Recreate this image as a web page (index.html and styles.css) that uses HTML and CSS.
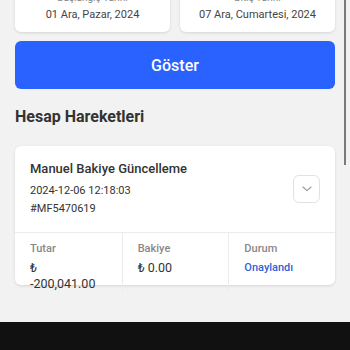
FILE: index.html
```html
<!DOCTYPE html>
<html lang="tr">
<head>
<meta charset="utf-8">
<title>Hesap Hareketleri</title>
<link rel="stylesheet" href="styles.css">
</head>
<body>
<div class="screen">
  <main class="content">
    <div class="dates">
      <div class="date-card">
        <div class="date-label">Başlangıç Tarihi</div>
        <div class="date-value">01 Ara, Pazar, 2024</div>
      </div>
      <div class="date-card">
        <div class="date-label">Bitiş Tarihi</div>
        <div class="date-value">07 Ara, Cumartesi, 2024</div>
      </div>
    </div>
    <button class="show-btn" type="button">Göster</button>
    <h2 class="section-title">Hesap Hareketleri</h2>
    <div class="tx-card">
      <div class="tx-head">
        <div class="tx-info">
          <div class="tx-title">Manuel Bakiye Güncelleme</div>
          <div class="tx-meta tx-date">2024-12-06 12:18:03</div>
          <div class="tx-meta">#MF5470619</div>
        </div>
        <button class="toggle" type="button" aria-label="Detay">
          <svg width="10" height="6" viewBox="0 0 10 6"><path d="M1 1 L5 4.6 L9 1" fill="none" stroke="#9a9a9a" stroke-width="1.1" stroke-linecap="round" stroke-linejoin="round"/></svg>
        </button>
      </div>
      <div class="tx-stats">
        <div class="stat">
          <div class="stat-label">Tutar</div>
          <div class="stat-value">₺ -200,041.00</div>
        </div>
        <div class="stat">
          <div class="stat-label">Bakiye</div>
          <div class="stat-value">₺ 0.00</div>
        </div>
        <div class="stat">
          <div class="stat-label">Durum</div>
          <div class="stat-status">Onaylandı</div>
        </div>
      </div>
    </div>
  </main>
  <div class="scroll-thumb"></div>
  <div class="nav-bar"></div>
</div>
</body>
</html>
```
FILE: styles.css
```css
* { box-sizing: border-box; }
html, body { margin: 0; padding: 0; }
body {
  font-family: Roboto, "Noto Sans", "Liberation Sans", sans-serif;
  background: #f2f2f2;
  color: #333;
}
.screen {
  position: relative;
  width: 350px;
  height: 350px;
  display: flex;
  flex-direction: column;
  overflow: hidden;
}
.content {
  flex: 1;
  overflow: hidden;
  padding: 0 15px;
}
.dates {
  display: flex;
  gap: 10px;
  margin-top: -17px;
}
.date-card {
  flex: 1;
  background: #fff;
  border-radius: 6px;
  box-shadow: 0 1px 3px rgba(0,0,0,0.12);
  padding: 8px 6px 9px;
  text-align: center;
}
.date-label {
  font-size: 10px;
  line-height: 14px;
  color: #888;
  margin-bottom: 2px;
}
.date-value {
  font-size: 11px;
  line-height: 16px;
  color: #444;
}
.show-btn {
  display: block;
  width: 100%;
  height: 48px;
  margin-top: 9px;
  border: 0;
  border-radius: 6px;
  background: #2962ff;
  color: #fff;
  font-family: inherit;
  font-size: 16px;
  font-weight: 500;
}
.section-title {
  margin: 17px 0 0;
  font-size: 16px;
  line-height: 22px;
  font-weight: 700;
  color: #333;
}
.tx-card {
  margin-top: 18px;
  background: #fff;
  border-radius: 6px;
  box-shadow: 0 1px 3px rgba(0,0,0,0.12);
}
.tx-head {
  display: flex;
  align-items: center;
  justify-content: space-between;
  padding: 14px 15px;
  border-bottom: 1px solid #ececec;
}
.tx-title {
  font-size: 13px;
  line-height: 18px;
  font-weight: 500;
  color: #333;
}
.tx-meta {
  font-size: 11px;
  line-height: 18px;
  color: #333;
}
.tx-date { margin-top: 4px; }
.toggle {
  width: 27px;
  height: 28px;
  padding: 0;
  border: 1px solid #e2e2e2;
  border-radius: 6px;
  background: #fff;
  display: flex;
  align-items: center;
  justify-content: center;
}
.tx-stats {
  display: grid;
  grid-template-columns: 1fr 1fr 1fr;
  height: 52px;
}
.stat {
  padding: 9px 22px 0 15px;
  border-left: 1px solid #ececec;
  min-width: 0;
}
.stat:first-child { border-left: 0; }
.stat-label {
  font-size: 11px;
  line-height: 14px;
  font-weight: 500;
  color: #888;
}
.stat-value {
  margin-top: 4px;
  font-size: 12.5px;
  line-height: 16px;
  color: #333;
}
.stat-status {
  margin-top: 4px;
  font-size: 11px;
  line-height: 16px;
  font-weight: 500;
  color: #2f5fd8;
}
.scroll-thumb {
  position: absolute;
  top: 0;
  right: 4px;
  width: 2px;
  height: 165px;
  background: #7a7a7a;
}
.nav-bar {
  height: 28px;
  flex: none;
  background: #111;
}
```
